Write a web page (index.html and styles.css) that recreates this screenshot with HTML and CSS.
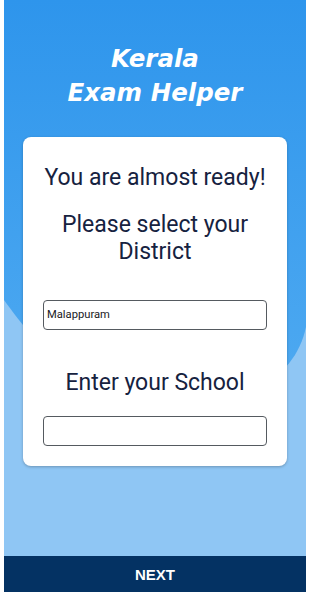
FILE: index.html
```html
<!DOCTYPE html>
<html lang="en">
<head>
<meta charset="utf-8">
<title>Kerala Exam Helper</title>
<link rel="stylesheet" href="styles.css">
</head>
<body>
<div class="screen">
  <svg class="bg" width="302" height="556" viewBox="0 0 302 556" preserveAspectRatio="none" aria-hidden="true">
    <defs>
      <linearGradient id="g" x1="0" y1="0" x2="0" y2="1">
        <stop offset="0" stop-color="#2e95ec"/>
        <stop offset="1" stop-color="#4faaf1"/>
      </linearGradient>
    </defs>
    <rect x="0" y="0" width="302" height="556" fill="#8fc6f4"/>
    <path d="M0 0 H302 V327 C292 374 250 404 165 406 C85 406 32 345 0 300 Z" fill="url(#g)"/>
  </svg>
  <div class="content">
    <h1 class="title">Kerala<br>Exam Helper</h1>
    <div class="card">
      <p class="heading">You are almost ready!</p>
      <p class="heading second">Please select your District</p>
      <div class="field district">Malappuram</div>
      <p class="heading school">Enter your School</p>
      <div class="field school-field"></div>
    </div>
  </div>
  <div class="next">NEXT</div>
</div>
</body>
</html>
```

FILE: styles.css
```css
html, body {
  margin: 0;
  padding: 0;
  background: #ffffff;
}
.screen {
  position: relative;
  width: 302px;
  height: 592px;
  margin: 0 4px;
  display: flex;
  flex-direction: column;
  overflow: hidden;
}
.bg {
  position: absolute;
  left: 0;
  top: 0;
  z-index: 0;
}
.content {
  position: relative;
  z-index: 1;
  flex: 1;
  display: flex;
  flex-direction: column;
  align-items: center;
}
.title {
  margin: 42px 0 0;
  font-family: "DejaVu Sans", Verdana, sans-serif;
  font-weight: bold;
  font-style: italic;
  font-size: 24.5px;
  line-height: 34px;
  color: #ffffff;
  text-align: center;
}
.card {
  margin-top: 27px;
  width: 264px;
  box-sizing: border-box;
  background: #ffffff;
  border-radius: 8px;
  box-shadow: 0 1px 3px rgba(0, 0, 0, 0.25);
  padding: 27px 20px 20px;
  display: flex;
  flex-direction: column;
  font-family: Roboto, "Liberation Sans", sans-serif;
}
.heading {
  margin: 0;
  font-size: 23px;
  line-height: 27px;
  color: #16223f;
  text-align: center;
  white-space: nowrap;
}
.second {
  margin-top: 20px;
  white-space: normal;
  padding: 0 14px;
}
.school {
  margin-top: 39px;
}
.field {
  height: 30px;
  box-sizing: border-box;
  border: 1px solid #555a60;
  border-radius: 4px;
  background: #ffffff;
  font-size: 11.2px;
  line-height: 28px;
  padding: 0 3px;
  color: #202124;
}
.district {
  margin-top: 35px;
}
.school-field {
  margin-top: 20px;
}
.next {
  position: relative;
  z-index: 1;
  height: 36px;
  background: #043263;
  color: #ffffff;
  font-family: "Liberation Sans", Arial, sans-serif;
  font-weight: bold;
  font-size: 15px;
  line-height: 38px;
  text-align: center;
}
```
